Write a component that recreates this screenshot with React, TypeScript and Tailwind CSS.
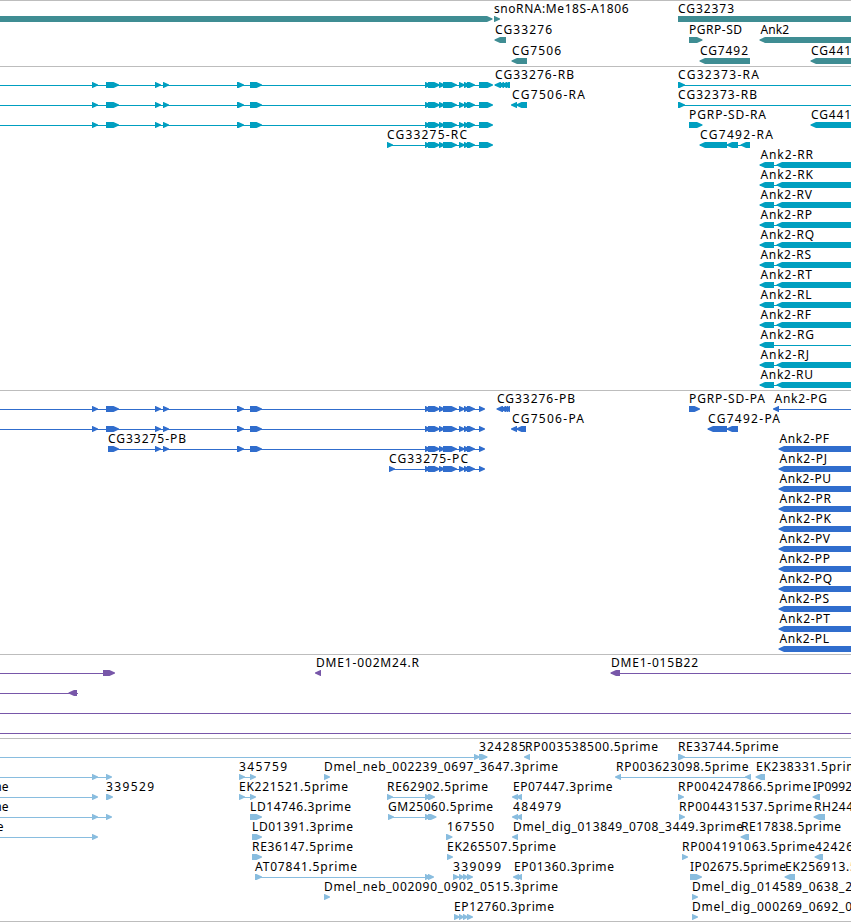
import clsx from 'clsx';

// [tail, tip]: the arrow head sits on the second value
type Exon = [number, number];
// [text, start, end]
type Label = [string, number, number];

interface Row {
  lines?: [number, number][];
  exons?: Exon[];
  labels?: Label[];
  // label that starts left of the view, given by its right edge
  tail?: [string, number];
}

interface Track {
  id: string;
  color: string;
  height: number;
  pitch: number;
  rows: Row[];
}

const END = 851;
const OFF = 900;

const head: Exon[] = [[92, 98], [106, 119]];
const middle: Exon[] = [[155, 161], [163, 169], [237, 244], [250, 262]];
const cluster: Exon[] = [[425, 431], [428, 440], [439, 445], [443, 457], [459, 465], [464, 470], [467, 475]];
const rnaExons: Exon[] = [...head, ...middle, ...cluster, [479, 493]];
const proteinExons: Exon[] = [...head, ...middle, ...cluster, [479, 485]];

const ank2Rna: [string, number][] = [
  ['RR', 813], ['RK', 813], ['RV', 812], ['RP', 812], ['RQ', 814], ['RS', 811],
  ['RT', 812], ['RL', 811.5], ['RF', 811], ['RG', 814], ['RJ', 809], ['RU', 813],
];
const ank2Protein: [string, number][] = [
  ['PU', 831], ['PR', 831], ['PK', 831], ['PV', 830], ['PP', 830], ['PQ', 832],
  ['PS', 829], ['PT', 830], ['PL', 829],
];

const tracks: Track[] = [
  {
    id: 'gene',
    color: 'text-[#3f8d93]',
    height: 66,
    pitch: 21,
    rows: [
      {
        exons: [[-20, 492.5], [494, 500], [678, OFF]],
        labels: [['snoRNA:Me18S-A1806', 494, 628.5], ['CG32373', 678, 734]],
      },
      {
        exons: [[506, 494.5], [689, 702.5], [OFF, 759.5]],
        labels: [['CG33276', 495, 552], ['PGRP-SD', 689, 742], ['Ank2', 760.5, 789]],
      },
      {
        exons: [[527, 511.5], [750, 699.5], [OFF, 810.5]],
        labels: [['CG7506', 512, 561], ['CG7492', 700, 748], ['CG441', 811, 851]],
      },
    ],
  },
  {
    id: 'transcript',
    color: 'text-[#009fc0]',
    height: 324,
    pitch: 20,
    rows: [
      {
        lines: [[0, 492], [495, 510], [678, END]],
        exons: [...rnaExons, [501, 494.5], [504, 498], [507, 501], [510, 503], [678, 685]],
        labels: [['CG33276-RB', 495, 574], ['CG32373-RA', 678, 759]],
      },
      {
        lines: [[0, 492], [512, 527], [678, END]],
        exons: [...rnaExons, [517, 511], [527, 516], [678, 685]],
        labels: [['CG7506-RA', 512, 585], ['CG32373-RB', 678, 757]],
      },
      {
        lines: [[0, 492]],
        exons: [...rnaExons, [689, 702.5], [OFF, 810.5]],
        labels: [['PGRP-SD-RA', 689, 766], ['CG441', 811, 851]],
      },
      {
        lines: [[387, 492], [700, 750]],
        exons: [[387, 393], ...cluster, [479, 493], [727, 699.5], [738, 726.5], [750, 740.5]],
        labels: [['CG33275-RC', 387, 467], ['CG7492-RA', 700, 773]],
      },
      ...ank2Rna.map(([name, end]): Row => ({
        lines: [[760, END]],
        exons: name === 'RG' ? [[774, 759.5]] : [[774, 759.5], [OFF, 776.5]],
        labels: [[`Ank2-${name}`, 760.5, end]],
      })),
    ],
  },
  {
    id: 'protein',
    color: 'text-[#306dcd]',
    height: 264,
    pitch: 20,
    rows: [
      {
        lines: [[0, 484], [774, END]],
        exons: [...proteinExons, [503, 496.5], [506, 500], [508, 502], [510, 504], [689, 700], [779, 773]],
        labels: [['CG33276-PB', 497, 575], ['PGRP-SD-PA', 689, 765], ['Ank2-PG', 774.5, 827]],
      },
      {
        lines: [[0, 484], [512, 526], [708, 738]],
        exons: [...proteinExons, [517, 511], [526, 516], [727, 707.5], [738, 726.5]],
        labels: [['CG7506-PA', 512, 584], ['CG7492-PA', 708, 780]],
      },
      {
        lines: [[108, 484]],
        exons: [[108, 119], ...middle, ...cluster, [479, 485], [OFF, 778.5]],
        labels: [['CG33275-PB', 108, 186], ['Ank2-PF', 779.5, 829]],
      },
      {
        lines: [[389, 484]],
        exons: [[389, 395], ...cluster, [479, 485], [OFF, 778.5]],
        labels: [['CG33275-PC', 389, 468], ['Ank2-PJ', 779.5, 827]],
      },
      ...ank2Protein.map(([name, end]): Row => ({
        exons: [[OFF, 778.5]],
        labels: [[`Ank2-${name}`, 779.5, end]],
      })),
    ],
  },
  {
    id: 'clone',
    color: 'text-[#7857a9]',
    height: 84,
    pitch: 20,
    rows: [
      {
        lines: [[0, 114], [611, END]],
        exons: [[103, 115], [321, 315], [620, 610.5]],
        labels: [['DME1-002M24.R', 316, 419], ['DME1-015B22', 611, 698]],
      },
      { lines: [[0, 78]], exons: [[77, 68.5]] },
      { lines: [[0, END]] },
      { lines: [[0, END]] },
    ],
  },
  {
    id: 'est',
    color: 'text-[#89bddf]',
    height: 183,
    pitch: 20,
    rows: [
      {
        lines: [[0, 487], [678, END]],
        exons: [[474, 480], [479, 487.5], [530, 524], [678, 685]],
        labels: [['324285', 479, 525.5], ['RP003538500.5prime', 525, 658], ['RE33744.5prime', 678, 778.5]],
      },
      {
        lines: [[0, 111], [239, 255], [616, 751]],
        exons: [[92, 98], [106, 112], [239, 245], [250, 256], [324, 330], [621, 615], [751, 745], [765, 755.5]],
        labels: [
          ['345759', 239, 287],
          ['Dmel_neb_002239_0697_3647.3prime', 324, 558],
          ['RP003623098.5prime', 616, 748.5],
          ['EK238331.5prime', 756, 865],
        ],
      },
      {
        tail: ['me', 8.5],
        lines: [[0, 97], [239, 255], [387, 434]],
        exons: [[92, 98], [106, 113], [239, 245], [250, 256], [387, 393], [425, 431], [428, 435], [518, 512], [522, 516], [678, 684], [820, 812.5]],
        labels: [
          ['339529', 106, 154],
          ['EK221521.5prime', 239, 348],
          ['RE62902.5prime', 387, 488],
          ['EP07447.3prime', 513, 612.5],
          ['RP004247866.5prime', 678, 811],
          ['IP0992', 813, 852],
        ],
      },
      {
        tail: ['me', 8.5],
        lines: [[0, 111], [388, 435]],
        exons: [[92, 98], [106, 112], [250, 262], [388, 394], [425, 431], [428, 436.5], [518, 512], [522, 516], [679, 685], [825, 813.5]],
        labels: [
          ['LD14746.3prime', 250, 351],
          ['GM25060.5prime', 388, 493],
          ['484979', 513, 561],
          ['RP004431537.5prime', 679, 812],
          ['RH244', 814, 853],
        ],
      },
      {
        tail: ['e', 3.5],
        lines: [[0, 97]],
        exons: [[92, 98], [252, 262], [446, 452.5], [518, 512], [749, 740.5]],
        labels: [
          ['LD01391.3prime', 252, 353],
          ['167550', 447, 494],
          ['Dmel_dig_013849_0708_3449.3prime', 513, 743],
          ['RE17838.5prime', 741, 841],
        ],
      },
      {
        exons: [[252, 262], [447, 453], [682, 688], [823, 814.5]],
        labels: [
          ['RE36147.5prime', 252, 353],
          ['EK265507.5prime', 447, 556],
          ['RP004191063.5prime', 682, 815],
          ['42426', 815, 853],
        ],
      },
      {
        lines: [[255, 433], [453, 472]],
        exons: [[255, 262], [425, 431], [428, 434], [453, 459], [459, 464], [463, 468], [467, 473], [519, 513], [522, 516], [690, 702], [795, 784.5]],
        labels: [
          ['AT07841.5prime', 255, 357],
          ['339099', 453, 501],
          ['EP01360.3prime', 514, 614],
          ['IP02675.5prime', 690, 786],
          ['EK256913.5prime', 785, 894],
        ],
      },
      {
        exons: [[324, 330], [692, 698]],
        labels: [['Dmel_neb_002090_0902_0515.3prime', 324, 558], ['Dmel_dig_014589_0638_2', 692, 852]],
      },
      {
        lines: [[454, 472]],
        exons: [[454, 460], [459, 464], [463, 468], [467, 473], [692, 698]],
        labels: [['EP12760.3prime', 454, 554], ['Dmel_dig_000269_0692_0', 692, 852]],
      },
    ],
  },
];

function Arrow({ exon: [tail, tip], y }: { exon: Exon; y: number }) {
  const dir = tip > tail ? 1 : -1;
  const neck = tip - dir * Math.min(5.5, Math.abs(tip - tail) - 0.5);
  return (
    <polygon
      fill="currentColor"
      points={`${tail},${y} ${neck},${y} ${tip},${y + 2.4} ${tip},${y + 3.4} ${neck},${y + 6} ${tail},${y + 6}`}
    />
  );
}

function TrackRow({ row, y }: { row: Row; y: number }) {
  return (
    <g>
      {row.lines?.map(([from, to]) => (
        <rect key={from} x={from} y={y + 18} width={to - from} height={1} fill="currentColor" />
      ))}
      {row.exons?.map((exon) => (
        <Arrow key={exon.join()} exon={exon} y={y + 15} />
      ))}
      {row.tail && (
        <text x={row.tail[1]} y={y + 12} textAnchor="end" className="fill-black">
          {row.tail[0]}
        </text>
      )}
      {row.labels?.map(([text, start, end]) => (
        <text key={text} x={start} y={y + 12} textLength={end - start} className="fill-black">
          {text}
        </text>
      ))}
    </g>
  );
}

export default function App() {
  return (
    <main className="flex h-[922px] w-[851px] flex-col overflow-hidden bg-white font-['Noto_Sans','Open_Sans',sans-serif] text-[12px]">
      {tracks.map((track) => (
        <section key={track.id} className={clsx('shrink-0 border-t border-[#bdbdbd]', track.color)}>
          <svg width={END} height={track.height - 1} className="block overflow-hidden">
            {track.rows.map((row, i) => (
              <TrackRow key={i} row={row} y={i * track.pitch} />
            ))}
          </svg>
        </section>
      ))}
      <div className="h-px shrink-0 bg-[#bdbdbd]" />
    </main>
  );
}
